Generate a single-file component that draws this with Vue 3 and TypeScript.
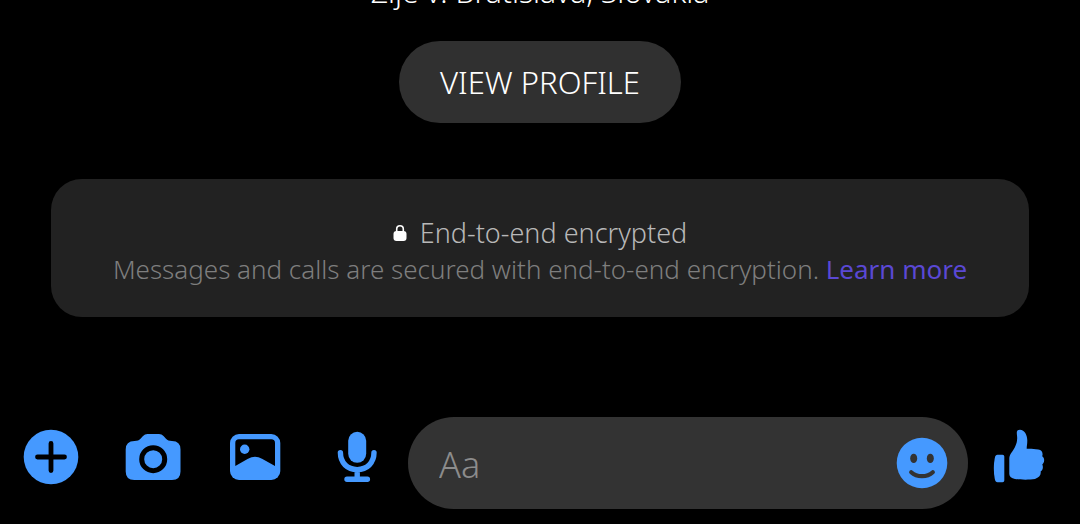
<script setup lang="ts">
import { ref } from 'vue'

const message = ref('')
</script>

<template>
  <main class="chat">
    <header class="location">
      <p class="location-text">Žije v: Bratislava, Slovakia</p>
    </header>

    <button class="profile" type="button">VIEW PROFILE</button>

    <section class="notice">
      <h2 class="notice-title">
        <svg class="lock" viewBox="0 0 14 18" aria-hidden="true">
          <path d="M3.7 8V5a3.3 3.3 0 0 1 6.6 0v3" fill="none" stroke="#fff" stroke-width="1.6" />
          <rect x="0.5" y="7" width="13" height="10" rx="3" fill="#fff" />
        </svg>
        <span>End-to-end encrypted</span>
      </h2>
      <p class="notice-text">
        Messages and calls are secured with end-to-end encryption.
        <a class="learn" href="#learn">Learn more</a>
      </p>
    </section>

    <form class="composer" @submit.prevent>
      <button class="action" type="button" aria-label="More actions">
        <svg class="icon" viewBox="0 0 60 60">
          <circle cx="30" cy="30" r="27.3" fill="#4599ff" />
          <path d="M16.5 30h27M30 16.5v27" stroke="#000" stroke-width="4.8" stroke-linecap="round" />
        </svg>
      </button>
      <button class="action" type="button" aria-label="Camera">
        <svg class="icon" viewBox="0 0 60 60">
          <path d="M11.5 14C14.5 14 16 13.6 17.5 11.8L20 9Q21.8 7 24.5 7H36Q38.7 7 40.5 9L43 11.8C44.5 13.6 46 14 49 14Q57.5 14 57.5 22.5V44.5Q57.5 53 49 53H11.3Q2.7 53 2.7 44.5V22.5Q2.7 14 11.5 14Z" fill="#4599ff" />
          <circle cx="30.2" cy="32.2" r="11.5" fill="none" stroke="#000" stroke-width="5" />
        </svg>
      </button>
      <button class="action" type="button" aria-label="Gallery">
        <svg class="icon" viewBox="0 0 60 60">
          <rect x="5" y="7" width="50.3" height="46" rx="9" fill="#4599ff" />
          <path d="M10.3 16Q10.3 12.3 14 12.3H46.3Q50 12.3 50 16V39L37 31.8Q30 27.6 23 31.8L10.3 39Z" fill="#000" />
          <circle cx="19.7" cy="22.2" r="4.7" fill="#4599ff" />
        </svg>
      </button>
      <button class="action" type="button" aria-label="Voice message">
        <svg class="icon" viewBox="0 0 60 60">
          <rect x="21.2" y="4.8" width="18" height="31" rx="9" fill="#4599ff" />
          <path d="M13.4 25.6C13.4 36 20.5 42.6 30.2 42.6S47 36 47 25.6M30.2 42.6V52M20 52.3H40.4" fill="none" stroke="#4599ff" stroke-width="5.4" stroke-linecap="round" />
        </svg>
      </button>

      <div class="field">
        <input v-model="message" class="field-input" type="text" placeholder="Aa" aria-label="Message" />
        <button class="emoji" type="button" aria-label="Emoji">
          <svg class="icon" viewBox="0 0 60 60">
            <circle cx="30" cy="30" r="25.3" fill="#4599ff" />
            <ellipse cx="21.7" cy="25.4" rx="3.5" ry="4.7" fill="#333" />
            <ellipse cx="38.3" cy="25.4" rx="3.5" ry="4.7" fill="#333" />
            <path d="M19.2 39.2Q23.5 43.2 30 43.2T40.8 39.2" fill="none" stroke="#333" stroke-width="4.2" stroke-linecap="round" />
          </svg>
        </button>
      </div>

      <button class="action" type="button" aria-label="Send a like">
        <svg class="icon" viewBox="0 0 60 60">
          <path d="M8.5 27.7H13.5Q15.3 27.7 15.3 29.5V53.5Q15.3 55.3 13.5 55.3H8.5Q6.5 55.3 5.8 52Q3.8 41 5.8 31Q6.5 27.7 8.5 27.7Z" fill="#4599ff" />
          <path d="M31 2.7C35.5 2.7 38.3 8 38.3 13.5C38.3 17 37.7 19 37.7 21.7C42 21.5 45 21.8 49.3 22.6C53 23.3 54.3 26 53.2 29.3C55.8 31 55.8 35 53.3 37.5C54.5 40.3 53.8 43 51.6 44.6C52.3 48 50 50.6 46 52C40 53 31 52.8 26 51.9C22.5 51.2 20.3 49.8 20.3 47V31.5C20.3 27 24 24.5 26 20C27.8 16.5 28.6 13 28 8.5C27.6 5 27.5 2.7 31 2.7Z" fill="#4599ff" />
        </svg>
      </button>
    </form>
  </main>
</template>

<style>
body {
  margin: 0;
  background: #000;
}
</style>

<style scoped>
.chat {
  display: flex;
  flex-direction: column;
  box-sizing: border-box;
  min-height: 100vh;
  padding-bottom: 15px;
  background: #000;
  font-family: "Noto Sans", "Open Sans", sans-serif;
  font-weight: 300;
}

button {
  border: 0;
  padding: 0;
  background: none;
  font: inherit;
  cursor: pointer;
}

.location {
  display: flex;
  align-items: flex-end;
  justify-content: center;
  height: 10px;
  margin-bottom: 31px;
  overflow: hidden;
}

.location-text {
  margin: 0;
  color: #fff;
  font-size: 30px;
  line-height: 36px;
}

.profile {
  align-self: center;
  padding: 20px 41px;
  border-radius: 41px;
  background: #303030;
  color: #fff;
  font-size: 31px;
  line-height: 42px;
}

.notice {
  margin: 56px 51px 0;
  padding: 36px 24px 30px;
  border-radius: 31px;
  background: #222;
  font-size: 26px;
  line-height: 36px;
  text-align: center;
}

.notice-title {
  display: flex;
  align-items: center;
  justify-content: center;
  gap: 13px;
  margin: 0;
  color: #b8b8b8;
  font-size: 27px;
  font-weight: inherit;
}

.lock {
  width: 14px;
  height: 18px;
}

.notice-text {
  margin: 0;
  color: #7e7e7e;
}

.learn {
  color: #5a48d4;
  font-weight: 400;
  text-decoration: none;
}

.composer {
  display: flex;
  align-items: flex-start;
  margin-top: auto;
  padding-right: 10px;
}

.action {
  display: flex;
  flex: none;
  align-items: center;
  justify-content: center;
  width: 102px;
  height: 80px;
}

.icon {
  display: block;
  width: 60px;
  height: 60px;
}

.field {
  display: flex;
  flex: 1;
  align-items: center;
  box-sizing: border-box;
  min-width: 0;
  height: 92px;
  padding: 0 16px 0 31px;
  border-radius: 46px;
  background: #333;
}

.field-input {
  flex: 1;
  min-width: 0;
  padding: 4px 0 0;
  border: 0;
  outline: 0;
  background: none;
  color: #fff;
  font: inherit;
  font-size: 36px;
  line-height: 48px;
}

.field-input::placeholder {
  color: #8c8c8c;
  opacity: 1;
}

.emoji {
  flex: none;
}
</style>
